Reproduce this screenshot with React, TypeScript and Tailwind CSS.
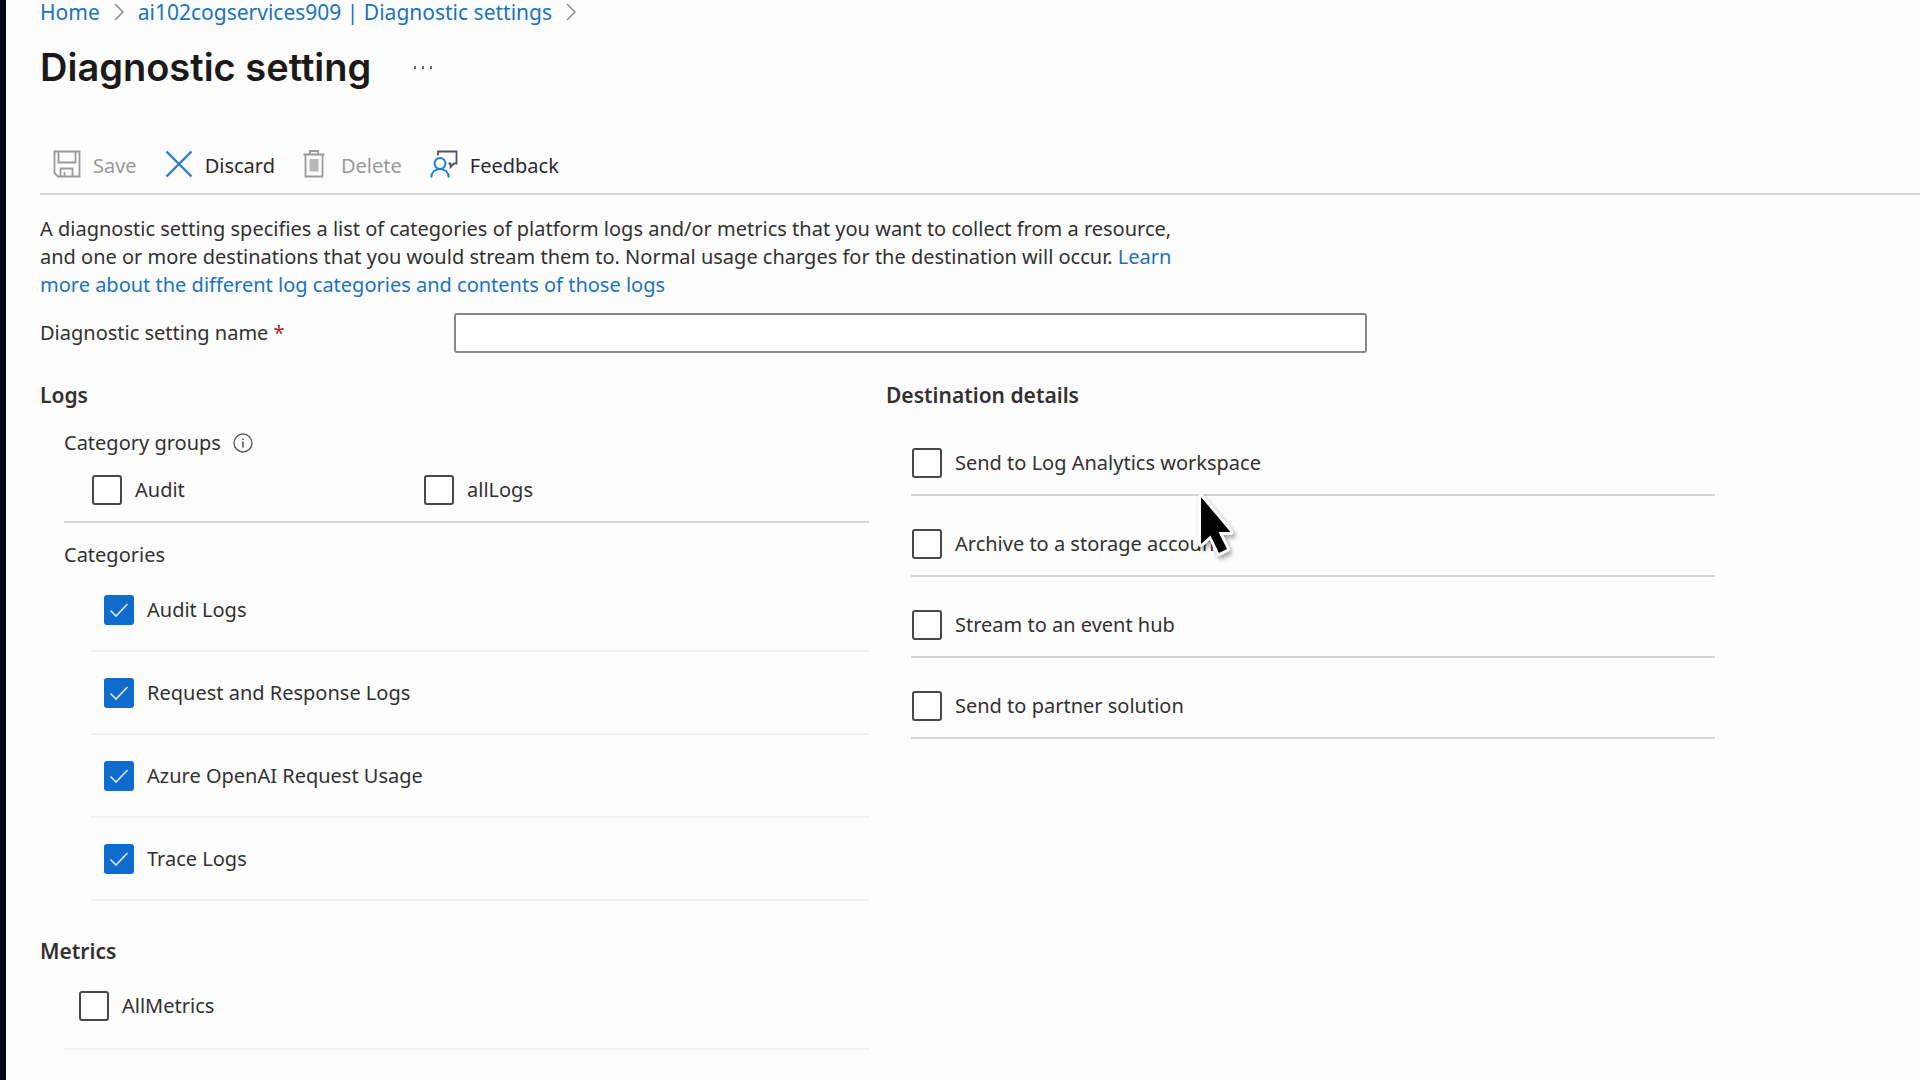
import { useState } from "react";
import type { ReactNode } from "react";
import clsx from "clsx";

// ============== Icons =================
function SaveIcon() {
  return (
    <svg className="w-7 h-7" viewBox="0 0 28 28" fill="none" stroke="currentColor" strokeWidth={1.8}>
      <path d="M1.5 1.5h25v25H5l-3.5-3.5z" />
      <path d="M5.5 1.5v11h17v-11" />
      <path d="M7.5 26.5v-8h12v8M11.5 26.5v-4.5" />
    </svg>
  );
}

function DiscardIcon() {
  return (
    <svg className="w-7 h-7" viewBox="0 0 28 28" fill="none" stroke="#2b7cc7" strokeWidth={2.4}>
      <path d="M1.5 1.5l25 25M26.5 1.5l-25 25" />
    </svg>
  );
}

function DeleteIcon() {
  return (
    <svg className="w-[26px] h-7" viewBox="0 0 26 28" fill="none" stroke="currentColor" strokeWidth={1.8}>
      <path d="M0.5 4.500h21M7 4.500V1h8v3.500M2.500 4.500v22h17v-22" />
      <path d="M6.500 9h9v12.500h-9z" fill="currentColor" fillOpacity={0.7} stroke="none" />
    </svg>
  );
}

function FeedbackIcon() {
  return (
    <svg className="w-7 h-7" viewBox="0 0 28 28" fill="none" strokeWidth={1.8}>
      <path d="M8 5.500V1.500h18.500v12h-2.500L20.500 17v-3.500h-2" stroke="#4b5560" />
      <circle cx="10" cy="13.500" r="5.500" stroke="#1c7fd6" strokeWidth={2} />
      <path d="M1.200 27.500c0-5 3.800-8.500 8.800-8.500s8.800 3.500 8.800 8.500" stroke="#1c7fd6" strokeWidth={2} />
    </svg>
  );
}

function ChevronIcon() {
  return (
    <svg className="w-[10px] h-[18px]" viewBox="0 0 10 18" fill="none" stroke="#8a8a8a" strokeWidth={1.5}>
      <path d="M1 1l8 8-8 8" />
    </svg>
  );
}

function InfoIcon() {
  return (
    <svg className="w-5 h-5" viewBox="0 0 20 20" fill="none" stroke="#5c5c5c" strokeWidth={1.4}>
      <circle cx="10" cy="10" r="9" />
      <path d="M10 8.500v6M10 5.500v1.500" strokeWidth={1.6} />
    </svg>
  );
}

function PointerIcon() {
  return (
    <svg
      className="absolute left-[285px] -top-[5px] w-12 h-[72px] drop-shadow-[2px_3px_2px_rgba(0,0,0,0.35)] pointer-events-none"
      viewBox="0 0 48 72"
    >
      <path
        d="M5 6v47l9.500-8.500 8.500 17.500 8-4-8.500-17h12z"
        fill="#000"
        stroke="#fff"
        strokeWidth={6}
        strokeLinejoin="round"
        paintOrder="stroke"
      />
    </svg>
  );
}

// ============== Controls =================
function Checkbox({ label, defaultChecked = false }: { label: string; defaultChecked?: boolean }) {
  return (
    <label className="inline-flex items-center gap-[13px] pl-px">
      <span className="grid place-items-center">
        <input
          type="checkbox"
          defaultChecked={defaultChecked}
          className="peer col-start-1 row-start-1 w-[30px] h-[30px] appearance-none rounded-[3px] border-2 border-[#4a4847] bg-white checked:border-[#0f6cce] checked:bg-[#0f6cce]"
        />
        <svg
          className="col-start-1 row-start-1 w-5 h-4 hidden peer-checked:block pointer-events-none"
          viewBox="0 0 20 16"
          fill="none"
          stroke="#d9ebfb"
          strokeWidth={1.6}
        >
          <path d="M1.500 8.500l5.500 5.500L18.500 2" />
        </svg>
      </span>
      <span>{label}</span>
    </label>
  );
}

function ToolbarButton({ icon, label, disabled }: { icon: ReactNode; label: string; disabled?: boolean }) {
  return (
    <button
      type="button"
      disabled={disabled}
      className={clsx("flex items-center gap-3", disabled ? "text-[#9a9a9a]" : "text-[#2b2a29]")}
    >
      {icon}
      <span className="pt-1">{label}</span>
    </button>
  );
}

const categories = ["Audit Logs", "Request and Response Logs", "Azure OpenAI Request Usage", "Trace Logs"];

const destinations = [
  "Send to Log Analytics workspace",
  "Archive to a storage account",
  "Stream to an event hub",
  "Send to partner solution",
];

// ============== Diagnostic Setting Page =================
export default function App() {
  const [name, setName] = useState("");

  return (
    <div className="min-h-screen border-l-[6px] border-[#04071a] bg-[#fdfdfd] pl-[34px] font-['Noto_Sans','Open_Sans',sans-serif] text-[20px] leading-7 text-[#323130]">
      {/* Breadcrumb */}
      <nav className="flex items-center gap-[14px] h-6 text-[21px] text-[#1a73bf]">
        <a href="#home">Home</a>
        <ChevronIcon />
        <a href="#settings">ai102cogservices909 | Diagnostic settings</a>
        <ChevronIcon />
      </nav>

      {/* Title */}
      <header className="flex items-center gap-[43px] mt-[19px]">
        <h1 className="font-['Inter',sans-serif] text-[38px] leading-[48px] font-semibold text-[#1b1a19]">
          Diagnostic setting
        </h1>
        <button type="button" aria-label="More actions" className="flex gap-[6px]">
          <span className="w-[2px] h-[3px] bg-[#6b6b6b]" />
          <span className="w-[2px] h-[3px] bg-[#6b6b6b]" />
          <span className="w-[2px] h-[3px] bg-[#6b6b6b]" />
        </button>
      </header>

      {/* Toolbar */}
      <div className="flex items-center gap-7 mt-[43px] h-[61px] pl-[13px] border-b-2 border-[#d4d4d4]">
        <ToolbarButton icon={<SaveIcon />} label="Save" disabled />
        <ToolbarButton icon={<DiscardIcon />} label="Discard" />
        <ToolbarButton icon={<DeleteIcon />} label="Delete" disabled />
        <ToolbarButton icon={<FeedbackIcon />} label="Feedback" />
      </div>

      <main className="max-w-[1675px]">
        <p className="max-w-[1160px] mt-5">
          A diagnostic setting specifies a list of categories of platform logs and/or metrics that you want to collect
          from a resource, and one or more destinations that you would stream them to. Normal usage charges for the
          destination will occur.{" "}
          <a href="#learn" className="text-[#1a73bf]">
            Learn more about the different log categories and contents of those logs
          </a>
        </p>

        {/* Setting name */}
        <div className="flex items-center mt-3.5">
          <label htmlFor="setting-name" className="w-[414px]">
            Diagnostic setting name <span className="text-[#a4262c]">*</span>
          </label>
          <input
            id="setting-name"
            type="text"
            value={name}
            onChange={(e) => setName(e.target.value)}
            className="w-full max-w-[913px] h-10 px-3 rounded-[3px] border-2 border-[#8a8886] bg-white outline-none"
          />
        </div>

        <div className="grid grid-cols-2 gap-[17px] mt-7">
          {/* Logs and metrics */}
          <div>
            <h2 className="text-[21px] font-semibold">Logs</h2>
            <div className="pl-6">
              <div className="flex items-center gap-3 mt-5">
                <h3>Category groups</h3>
                <InfoIcon />
              </div>
              <div className="grid grid-cols-[332px_1fr] pl-[27px] pt-[18px] pb-4 border-b-2 border-[#d4d4d4]">
                <Checkbox label="Audit" />
                <Checkbox label="allLogs" />
              </div>
              <h3 className="mt-[18px]">Categories</h3>
              <ul className="pl-[27px]">
                {categories.map((item) => (
                  <li key={item} className="flex items-end h-[83px] pl-3 pb-[25px] border-b-2 border-[#f0f0f0]">
                    <Checkbox label={item} defaultChecked />
                  </li>
                ))}
              </ul>
            </div>

            <h2 className="mt-9 text-[21px] font-semibold">Metrics</h2>
            <div className="ml-6 pl-[14px] pt-[26px] pb-5 border-b-2 border-[#f0f0f0]">
              <Checkbox label="AllMetrics" />
            </div>
          </div>

          {/* Destinations */}
          <div>
            <h2 className="text-[21px] font-semibold">Destination details</h2>
            <ul className="pl-[25px] mt-[6px]">
              {destinations.map((item, i) => (
                <li key={item} className="relative flex items-end h-[81px] pb-4 border-b-2 border-[#d4d4d4]">
                  <Checkbox label={item} />
                  {i === 1 && <PointerIcon />}
                </li>
              ))}
            </ul>
          </div>
        </div>
      </main>
    </div>
  );
}
